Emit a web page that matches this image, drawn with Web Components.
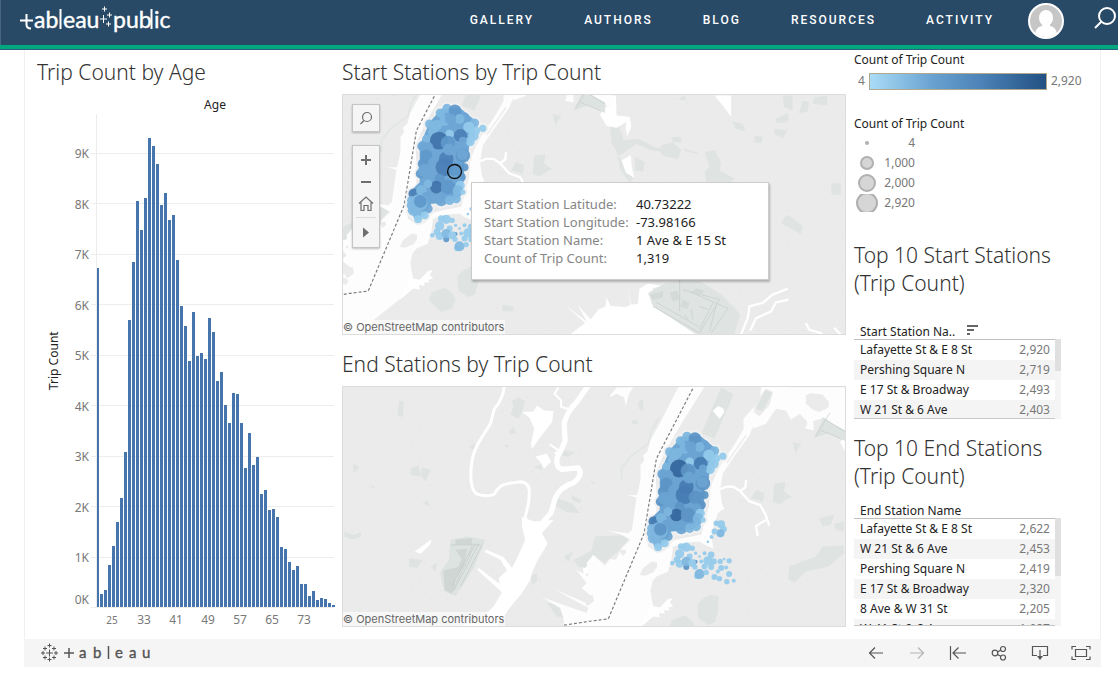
<!DOCTYPE html>
<html lang="en">
<head>
<meta charset="utf-8">
<title>Trip dashboard</title>
<style>
body { margin: 0; background: #fff; color: #333; font: 12px/20px "Noto Sans", "Open Sans", sans-serif; }
</style>
</head>
<body>
<site-header></site-header>
<dash-board></dash-board>
<script>
const define = (name, html, setup) => customElements.define(name, class extends HTMLElement {
  constructor() {
    super();
    this.attachShadow({ mode: 'open' }).innerHTML = html;
  }
  connectedCallback() { if (setup) setup(this, this.shadowRoot); }
});

/* ---------- header ---------- */
define('site-header', `
<style>
:host { display: block; }
header { display: flex; align-items: center; height: 45px; background: #284a67; border-bottom: 4px solid #00a87e; box-shadow: inset 1px 0 #47657e, 0 1px #2f5f80; margin-bottom: 1px; padding-left: 20px; overflow: hidden; }
.logo { display: block; width: 152px; height: 36px; margin-bottom: 4px; }
.logo svg { display: block; }
nav { display: flex; gap: 52px; margin-left: auto; padding-bottom: 6px; }
nav a { color: #fff; text-decoration: none; font: 500 12px/20px Roboto, "Noto Sans", sans-serif; letter-spacing: 2px; white-space: nowrap; margin-right: -2px; }
.me { margin: 0 0 3px 36px; height: 36px; }
button { background: none; border: 0; padding: 0; margin: 0 0 8px 28px; width: 26px; height: 24px; }
</style>
<header>
  <a class="logo" href="#" aria-label="tableau public"><svg width="152" height="36" fill="#fff" font-family="Lato, sans-serif" font-size="23">
    <path d="M0 17.5h13M6.500 11v10.500q0 4 4.500 4M40.500 6v20M131.500 6v20" fill="none" stroke="#fff" stroke-width="2"/>
    <g stroke="#fff" stroke-width=".4"><text x="14" y="25">ab</text><text x="43" y="25">eau</text><text x="93" y="25">pub</text><text x="134" y="25">ic</text></g>
    <path d="M80 16h7M83.500 12v8M82 6h5M84.500 3.500v5M87 12h5M89.500 9.500v5M86 21h5M88.500 18.500v5" stroke="#fff" stroke-width="1"/>
  </svg></a>
  <nav><a href="#">GALLERY</a><a href="#">AUTHORS</a><a href="#">BLOG</a><a href="#">RESOURCES</a><a href="#">ACTIVITY</a></nav>
  <a class="me" href="#" aria-label="Profile"><svg width="36" height="36"><defs><clipPath id="c"><circle cx="18" cy="18" r="16"/></clipPath></defs><circle cx="18" cy="18" r="17" fill="#c6c6c6" stroke="#fff" stroke-width="2"/><g clip-path="url(#c)" fill="#fff"><ellipse cx="18" cy="15" rx="7" ry="8"/><path d="M14 19h8v4c5 1 7 4 7 12H7c0-8 2-11 7-12z"/></g></svg></a>
  <button aria-label="Search"><svg width="26" height="24" fill="none" stroke="#fff" stroke-width="2"><circle cx="15" cy="9" r="8"/><path d="M9 15l-6 6"/></svg></button>
</header>`);

/* ---------- histogram ---------- */
const bars = [339,13,17,42,61,85,109,155,287,345,406,377,409,469,461,443,402,414,387,392,347,301,281,246,295,251,254,248,289,275,226,235,202,184,214,213,184,139,174,142,150,113,117,97,98,90,60,58,45,37,41,23,23,11,16,7,9,8,4,2];
define('age-chart', `
<style>
:host { display: grid; grid-template-columns: 54px minmax(0, 1fr); grid-template-rows: 44px 20px 493px 24px; }
h2 { grid-column: 1 / 3; margin: 8px 0 0; font-size: 21px; line-height: 28px; font-weight: 300; white-space: nowrap; }
.age { grid-column: 2 / 3; text-align: center; color: #222; line-height: 22px; padding-left: 5px; }
.y { display: flex; margin-right: 2px; color: #787878; }
.name { writing-mode: vertical-rl; transform: rotate(180deg); text-align: center; color: #222; line-height: 20px; margin-left: 7px; }
.ticks { flex: 1; text-align: right; }
.list { display: flex; flex-direction: column; justify-content: space-between; height: 424px; padding: 30px 0 22px; }
.plot { height: 493px; overflow: visible; width: 100%; display: block; }
.x { grid-column: 2; display: flex; color: #787878; padding-left: 5px; line-height: 26px; }
.x span { flex: 0 0 32px; text-align: center; white-space: nowrap; }
.x .s { font-size: 10px; }
.plotbox { padding-left: 5px; height: 493px; }
</style>
<h2>Trip Count by Age</h2>
<div class="age">Age</div>
<div class="y"><div class="name">Trip Count</div><div class="ticks"><div class="list"><span>9K</span><span>8K</span><span>7K</span><span>6K</span><span>5K</span><span>4K</span><span>3K</span><span>2K</span><span>1K</span></div>0K</div></div>
<div class="plotbox"><svg class="plot" viewBox="0 0 238 493" preserveAspectRatio="none" shape-rendering="crispEdges" role="img" aria-label="Trip count by age"></svg></div>
<div class="x"><span class="s">25</span><span>33</span><span>41</span><span>49</span><span>57</span><span>65</span><span>73</span></div>`,
(el, root) => {
  let s = '<path d="M0.5 0V493" stroke="#ececec"/>';
  for (let k = 0; k < 10; k++) s += `<rect x="-5" y="${Math.round(493 - k * 50.5)}" width="243" height="1" fill="#ededed"/>`;
  bars.forEach((h, i) => { s += `<rect x="${i ? i * 4 : 1}" y="${493 - h}" width="${i ? 3 : 2}" height="${h}" fill="#4575ac"/>`; });
  root.querySelector('.plot').innerHTML = s;
});

/* ---------- maps: one coastline, two views of it ---------- */
const stations = [[292,168,14,1],[272,182,14,1],[316,175,19,3],[345,195,15,2],[375,212,14,1],[400,228,11,0],[330,200,15,1],[285,205,16,1],[303,200,17,2],[240,215,14,1],[262,218,16,1],[358,225,17,0],[372,250,16,0],[380,235,12,0],[333,250,20,4],[300,245,13,0],[250,240,16,1],[230,260,13,1],[268,265,27,5],[362,268,14,0],[340,265,12,2],[325,285,18,2],[345,290,14,2],[218,282,15,2],[235,285,16,2],[230,310,18,3],[250,330,15,2],[290,320,22,4],[285,345,27,4],[295,272,22,3],[298,292,18,2],[340,310,22,3],[338,306,17,2],[220,335,16,3],[212,365,14,3],[225,355,20,2],[240,375,18,2],[345,345,12,3],[318,352,21,3],[270,380,15,3],[335,375,14,3],[260,405,19,5],[320,385,16,2],[295,405,22,3],[332,400,14,0],[325,415,16,1],[340,420,8,0],[320,440,14,1],[235,395,13,1],[192,425,16,4],[215,415,16,1],[185,445,13,1],[230,435,16,2],[252,440,14,2],[275,445,18,2],[300,445,14,1],[235,470,14,2],[190,475,16,1],[182,460,11,1],[205,490,15,1],[225,490,12,0],[205,502,12,0],[208,452,26,1],[212,448,19,3],
[290,502,14,0],[275,500,10,0],[308,505,8,0],[270,522,14,0],[300,530,9,0],[262,540,10,0],[248,550,7,0],[270,552,12,0],[290,562,9,3],[290,545,14,1],[318,546,6,3],[308,550,12,0],[316,562,8,0],[330,530,4,0],[345,520,6,0],[365,525,10,0],[372,545,10,0],[355,543,14,0],[345,560,9,0],[322,590,8,0],[330,583,15,1],[350,578,8,0],[365,562,9,0],[375,592,9,0],[392,545,8,0],[404,538,4,0],[419,543,8,0],[395,565,9,0],[410,563,6,0],[419,583,9,0],[390,597,8,0],[412,606,8,0],[433,603,6,0],[385,575,6,0],[335,545,6,0],[318,520,5,0],[380,430,8,0],[395,433,12,0],[402,448,10,0],[393,460,12,1],[375,455,9,0],[366,471,6,0],[355,486,4,0]];
const geo = `
<rect x="-740" y="-120" width="2270" height="860" fill="#ebebeb"/>
<rect x="-740" y="-120" width="2270" height="860" fill="url(#grain)"/>
<g transform="translate(744 -12)">
  <path fill="#dfe4e2" d="M345 185l30-5 20 35-5 25 45 25-15 20-70-5-5-35 15-15zM727 280h28v35l-28-3zM590 375l15 5 37 30-7 22-60-32zM580 15h30v45l-25-10zM640 30l20 5-5 30-25 3zM675 20l40-5v30l-45-5zM560 85l35-17 5 20-15 10-25-3zM555 115l40 5-15 25-25-15zM495 135l25 5-5 20-20-5zM425 92l35 8 8 25-28-10zM215 165l35-10 25 25-10 27-45-10-12-15zM245 140h30v15h-25zM60 110l25-5 15 35-15 55 45 70-10 15-30-45-10-55-15-20zM95 150l50-5 50 25 20 5v8l-30-2-45-20-50 35-15-20zM135 200l30 15-5 30-25-5zM0 20l45 30-5 18L0 40zM265 25l22-10v15zM280 175l45 12-3 5-40-12z"/>
  <path fill="#fff" d="M35 15h43l2 60 40 5 4 30-12 28-5-28 3-15-30 17-30-5-20-35 22-25zM375 15h50v65l-22-30zM95 210l28-15 2 30 8 38-25-15zM0 735v-43l45-28 5-40 12 25 45 3 15-5-10-60 12 58 20-3 5-45 25-15 45 6-30 8-4 45 145 95z"/>
  <path fill="#dfe4e2" d="M175 610l55-32 100-4 65 40 57 60-17 61H320L190 650z"/>
  <path fill="#d3dad8" d="M180 615l40-12v20l-30 7zM240 610l22-8 10 25-22 10zM280 630l20 10-8 18-20-8zM320 595l25 8-12 10-25-8z"/>
  <path fill="none" stroke="#ccd3d1" stroke-width="3" d="M190 650l140 80 60-100-110-30M270 560v105M200 638l128 74M300 606l115 50-50 75M370 640l-40 80M380 645l-20 80M285 675l10 15M305 660l5 30M330 650l25 10"/>
  <path fill="none" stroke="#fff" stroke-width="7" stroke-linejoin="round" d="M455 735l20-50 5-35 40-10 30-25 45-18M598 630l-38 8-15 28-45 20-18 38M650 700l10 20 40 12M735 715l20 20"/>
</g>
<g transform="translate(-6 -12)">
  <path fill="#dfe4e2" d="M270 610l50-13 25 30-10 30-35 10-30-30zM350 560l22-22 18 20 20 15-5 40-20 10-32-20zM485 645l35 5v15h-35zM430 705l25 5-15 15-15-5z"/>
  <path fill="#fff" d="M690 735L735 700 674 645 742 698 712 645 752 690 775 660 800 650V735zM5 440L30 430 45 445 8 475z"/>
</g>
<g transform="translate(-729 -246)">
  <path fill="#dfe4e2" d="M515 180l20-8 20 10-5 20-15 35-25-15 10-25zM175 180l15 5-3 45-17-5zM510 270l10-12 8 20-20 5zM385 320l20-12-5 20zM490 312l15 3-5 8zM210 385l25-10 5 35-30-5zM245 380l25 10-15 35-15-20zM245 490l15-10 10 20zM35 370l20 10-15 20zM10 575l30 10 20-10v15l-25 10-25-10zM205 655l40 5-15 25-25-5zM270 680l20-12-5 30zM650 475l45 15 25 30-40-3-35-20zM665 330l40 5-20 15-20-3zM580 380l25-8v18zM695 465l30 15-5 12-28-15zM620 790l40 5 10 40-20-5zM570 710l20-10v25l-15 10zM670 650l30-15-15 30zM700 660l60-30 25 10-50 45-20-5zM750 420l15 8-5 5zM90 435l12 5-8 5z"/>
  <path fill="#dde3e1" d="M330 600l50-10 55 10-35 85-55 85-35-15-12-55 27-40z"/>
  <path fill="#cfd6d4" d="M345 630l35-3-10 50-25 40-10 45-22-10-5-60 45-10 10-25zM345 600l50-5v18h-50z"/>
  <path fill="none" stroke="#c0c9c6" stroke-width="2" d="M330 615h90M405 610l-70 145M415 612l-75 140M425 615l-65 125M395 620l-60 120"/>
  <path fill="none" stroke="#fff" stroke-width="9" stroke-linejoin="round" d="M492 130Q490 175 462 205L450 250C425 290 400 325 395 360C385 420 395 455 410 462Q440 472 462 462C478 430 500 430 540 425Q570 428 567 460L565 490 555 530 562 560"/>
  <path fill="none" stroke="#fff" stroke-width="16" stroke-linejoin="round" d="M745 135L710 185Q680 215 672 250L675 300Q665 330 652 350Q645 380 665 388L715 383Q730 405 700 428Q660 440 645 475L632 520 600 555"/>
  <path fill="none" stroke="#fff" stroke-width="6" d="M655 140L643 160 663 180V200L693 208M628 312L658 332 643 340"/>
  <path fill="#fff" d="M545 215L580 213 590 195 612 210 640 212 636 245 600 290 575 327 572 310 582 265 568 232zM585 350L620 340 633 365 612 385 600 365zM222 635L250 615 273 598 268 615 240 642zM545 530L580 545 640 540 605 580 622 612 605 640 590 665 575 700 570 720 545 760 520 790 490 830 470 860H360L430 830 460 800 485 758 410 690 415 685 478 733 475 715 500 692 480 660 432 636 438 630 490 652 515 685 535 645 555 600 545 560z"/>
</g>
<g transform="translate(21 -126)">
  <path fill="#dfe4e2" d="M395 20L433 42 375 175 335 160zM555 310L590 305 585 335 608 350 570 372 550 365zM500 330L525 340 520 365 485 355zM610 185L635 190 620 220zM690 415L735 405 725 435 700 440zM735 432L765 425V455L740 450zM600 560L680 530 700 500 765 497V520L720 560 650 575 615 610 597 598zM335 665L360 645 388 650 385 705 365 733 328 715zM250 720L285 708 310 725 305 745H235zM15 470L125 465 90 510 45 548 0 528zM145 65L160 57V92L148 85zM125 120H143V130H128z"/>
  <path fill="none" stroke="#e1e5e4" stroke-width="5" d="M210 110L185 150 175 190 120 230 95 265V300"/>
  <path fill="#fdfdfd" d="M270 12L215 120 182 180 172 215 160 225 163 240 152 255V300L142 345 112 346 140 352 126 450 115 460 50 452 90 462 122 480 95 505 78 540 60 538 45 558 10 525 -10 550 -5 590 -42 570 -10 610 -25 625 10 655 0 675 -105 630 -5 685 -10 700 -145 653 -90 685 -80 715 -70 860H33L73 804 123 764 173 724 205 700 185 680 183 630 188 605 200 590 235 575 245 540 250 500 300 487 330 485 350 498 372 505 365 470 372 440 385 400 400 388 392 330 400 280 430 235 480 165 490 140 530 118 560 85 600 40V12H515L512 60 485 90 462 115 463 145 437 190 390 260 362 320 358 380 346 420 335 464 280 475 250 482 225 512 205 520 175 500 166 440 200 395 198 280 225 215 275 130 349 12z"/>
  <path fill="#fdfdfd" d="M590 20H790V170L705 112 672 122 674 150 648 145 655 125 632 100 605 118 590 90 560 85 530 130 490 145 510 110zM60 45L80 22 130 20 118 40 108 75 102 50 80 40 62 50z"/>
  <path fill="#ebebeb" d="M650 45L665 38 700 42 720 65 718 82 690 95 672 88 650 70zM150 585L160 565 185 545 202 548 202 562 190 578 165 588zM88 512L105 508 110 518 98 528zM493 95L500 62 530 25 552 35 540 75 510 108zM-20 655L8 645 12 665 -10 680z"/>
  <path fill="#dde3e1" d="M500 85L528 28 548 38 520 92zM672 175L702 115 768 150V182L718 158z"/>
  <path fill="none" stroke="#ebebeb" stroke-width="4" d="M412 248L470 165"/>
  <path fill="none" stroke="#c2cbc8" stroke-width="2" d="M680 168L722 98M700 112L768 154M695 150L755 175"/>
  <path fill="#fff" d="M370 92L385 77 402 84 404 96 390 115z"/>
  <path fill="none" stroke="#fff" stroke-width="7" stroke-linejoin="round" d="M390 328L410 320 432 320 452 333 468 322 470 300M452 333L480 364 512 375 528 402 540 437M530 420L500 438 505 468M395 375L402 388"/>
  <path fill="#fff" d="M183 645L190 680 210 684 235 658 250 655 240 668 250 680 235 684 240 692 222 692 225 702 208 700 210 714 190 710 150 745 180 680z"/>
  <path fill="#ebebeb" d="M186 655L200 645 215 660 208 676 194 676z"/>
  <path fill="none" stroke="#7a7a7a" stroke-width="3.500" stroke-dasharray="9 6" d="M-78 737L0 725 55 718 163 460 200 235 316 12"/>
</g>`;
define('trip-map', `
<style>
:host { display: block; position: relative; border: 1px solid #dcdcdc; box-sizing: border-box; height: 241px; }
.map { display: block; width: 100%; height: 100%; }
small { position: absolute; left: 0; bottom: 0; background: rgba(255,255,255,.6); color: #666; font: 11px/14px Inter, sans-serif; padding-right: 1px; white-space: nowrap; }
</style>
<svg class="map" preserveAspectRatio="xMidYMid slice" role="img"></svg>
<small>© OpenStreetMap contributors</small>
<slot></slot>`,
(el, root) => {
  const end = el.getAttribute('view') === 'end';
  const svg = root.querySelector('.map');
  svg.setAttribute('viewBox', end ? '-723 -108 1512 723' : '0 0 1512 723');
  svg.setAttribute('aria-label', end ? 'End stations' : 'Start stations');
  const tone = end ? ['#92caeb','#7db6df','#6ba4d2','#5b93c5','#457bb2','#35669d'] : ['#94cbec','#7fb8e1','#6ea7d5','#5f98ca','#4a80b7','#3f73aa'];
  svg.innerHTML = `<defs><pattern id="grain" width="90" height="90" patternUnits="userSpaceOnUse"><path fill="#e6e7e7" d="M10 10h6v4h-6zM45 22h4v7h-4zM75 8h5v4h-5zM22 55h7v4h-7zM60 60h4v5h-4zM80 78h6v4h-6zM38 80h5v4h-5z"/></pattern></defs>` + geo +
    '<g transform="translate(21 -126)"><g fill="#f1f1f1">' + stations.slice(0, 64).map(([x, y, r]) => `<circle cx="${x}" cy="${y}" r="${r + 6}"/>`).join('') + '</g>' +
    `<path fill="${tone[2]}" d="M275 170L330 165 378 205 376 255 346 305 343 380 335 430 305 450 245 455 225 490 200 500 180 475 185 415 210 390V280L240 210z"/>` +
    stations.map(([x, y, r, t]) => `<circle cx="${x}" cy="${y}" r="${r}" fill="${tone[t]}" fill-opacity=".93"/>`).join('') + '</g>' +
    (end ? '' : '<circle cx="336" cy="232" r="21" fill="none" stroke="#111" stroke-width="4"/>');
});

define('map-tools', `
<style>
:host { position: absolute; left: 9px; top: 9px; width: 28px; display: flex; flex-direction: column; gap: 13px; }
div { background: #f5f5f5; border: 1px solid #c4c4c4; box-shadow: 0 1px 2px rgba(0,0,0,.25); }
button { display: block; width: 26px; height: 22px; padding: 0; border: 0; background: none; }
.one button { height: 26px; }
.many { padding: 3px 0 4px; }
.many button:last-child { height: 28px; }
svg { display: block; margin: auto; fill: none; stroke: #6e6e6e; }
</style>
<div class="one"><button aria-label="Search map"><svg width="14" height="14" stroke-width="1.200"><circle cx="8" cy="6" r="4.500"/><path d="M5 9.500L1.500 13"/></svg></button></div>
<div class="many">
<button aria-label="Zoom in"><svg width="12" height="12" stroke-width="2"><path d="M1 6h10M6 1v10"/></svg></button>
<button aria-label="Zoom out"><svg width="12" height="12" stroke-width="2"><path d="M1 6h10"/></svg></button>
<button aria-label="Home"><svg width="16" height="16" stroke-width="1.200"><path d="M1 7.500L8 1l7 6.500M3 6.500v8h3v-5h4v5h3v-8"/></svg></button>
<button aria-label="More tools"><svg width="22" height="26"><path d="M1 1.500h20" stroke="#ddd"/><path d="M8 11.500v10l6-5z" fill="#6e6e6e" stroke="none"/></svg></button>
</div>`);

define('map-tip', `
<style>
:host { position: absolute; left: 128px; top: 87px; width: 298px; height: 98px; box-sizing: border-box; background: #fff; border: 1px solid #ccc; box-shadow: 1px 2px 2px rgba(0,0,0,.25); padding: 12px; }
dl { margin: 0; display: grid; grid-template-columns: 152px 1fr; font-size: 13px; line-height: 18px; white-space: nowrap; }
dt { color: #858585; } dd { margin: 0; color: #222; }
</style>
<dl><dt>Start Station Latitude:</dt><dd>40.73222</dd><dt>Start Station Longitude:</dt><dd>-73.98166</dd><dt>Start Station Name:</dt><dd>1 Ave &amp; E 15 St</dd><dt>Count of Trip Count:</dt><dd>1,319</dd></dl>`);

/* ---------- legends and tables ---------- */
define('color-legend', `
<style>
:host { display: block; height: 65px; color: #222; }
.row { display: flex; align-items: center; gap: 4px; padding-left: 4px; line-height: 20px; margin-top: 1px; color: #787878; }
i { width: 176px; height: 15px; border: 1px solid #b0a98c; background: linear-gradient(90deg, #aadcf6, #6aa3d2 35%, #4a80b5 65%, #225083); }
</style>
Count of Trip Count
<div class="row"><span>4</span><i></i><span>2,920</span></div>`);

define('size-legend', `
<style>
:host { display: block; color: #222; line-height: 18px; }
.row { display: grid; grid-template-columns: 26px 35px; height: 20px; line-height: 20px; color: #787878; text-align: right; align-items: center; }
svg { display: block; width: 26px; height: 18px; fill: #d6d6d6; stroke: #b0b0b0; stroke-width: 2; }
</style>
Count of Trip Count
<div class="row"><svg><circle cx="13" cy="9" r="1"/></svg>4</div>
<div class="row"><svg><circle cx="13" cy="9" r="6"/></svg>1,000</div>
<div class="row"><svg><circle cx="13" cy="9" r="8"/></svg>2,000</div>
<div class="row"><svg><circle cx="13" cy="9" r="10"/></svg>2,920</div>`);

define('top-table', `
<style>
:host { display: block; width: 207px; }
h2 { margin: 0 0 var(--gap); font-size: 21px; line-height: 28px; font-weight: 300; white-space: nowrap; }
.frame { display: flex; align-items: flex-end; }
.clip { width: 201px; height: var(--h); overflow: hidden; border-bottom: 1px solid #c8c8c8; box-sizing: border-box; }
table { width: 201px; border-collapse: collapse; color: #222; }
th { font-weight: 400; text-align: left; height: 15px; line-height: 15px; padding: 3px 6px 0; border-bottom: 1px solid #c0c0c0; white-space: nowrap; }
th svg { margin-left: 12px; }
td { height: 20px; line-height: 20px; padding: 0 5px 0 6px; white-space: nowrap; }
td + td { text-align: right; color: #787878; }
tr:nth-child(even) td { background: #f4f4f4; }
.bar { width: 6px; margin-left: auto; height: var(--track); background: #f5f5f5; }
.bar i { display: block; height: var(--thumb); background: #e0e0e0; }
</style>
<h2><slot></slot></h2>
<div class="frame"><div class="clip"><table><thead></thead><tbody></tbody></table></div><div class="bar"><i></i></div></div>`,
(el, root) => {
  const sort = el.hasAttribute('sorted') ? '<svg width="11" height="11" fill="#666"><path d="M0 0h11v2H0zM0 4h7v2H0zM0 8h3v2H0z"/></svg>' : '';
  root.querySelector('thead').innerHTML = `<tr><th colspan="2" scope="col">${el.getAttribute('head')}${sort}</th></tr>`;
  root.querySelector('tbody').innerHTML = el.getAttribute('rows').split(';').map(r => {
    const [a, b] = r.split('|');
    return `<tr><td>${a.replace('&', '&amp;')}</td><td>${b}</td></tr>`;
  }).join('');
});

/* ---------- footer toolbar ---------- */
define('viz-toolbar', `
<style>
:host { display: flex; align-items: center; height: 28px; background: #f5f5f5; }
.logo { display: block; margin: 0 auto 0 17px; }
.logo svg { display: block; }
button { width: 41px; height: 28px; padding: 0; border: 0; background: none; }
button svg { display: block; margin: auto; fill: none; stroke: #555; stroke-width: 1.200; }
button:disabled svg { stroke: #b5b5b5; }
</style>
<a class="logo" href="#" aria-label="tableau"><svg width="112" height="20" fill="#555" font-family="Lato, sans-serif" font-size="15">
<path stroke="#555" fill="none" d="M5 10h7M8.500 6.500v7M6.500 2.500h4M8.500 .5v4M6.500 16.500h4M8.500 14.500v4M0 10h4M2 8v4M13 10h4M15 8v4M2 5.500h4M4 3.500v4M11 5.500h4M13 3.500v4M2 14.500h4M4 12.500v4M11 14.500h4M13 12.500v4"/>
<path stroke="#555" stroke-width="1.500" fill="none" d="M23 10h10M28 5v10M67.500 3v13"/>
<g stroke="#555" stroke-width=".4"><text x="38" y="15">a</text><text x="52" y="15">b</text><text x="74" y="15">e</text><text x="88" y="15">a</text><text x="101" y="15">u</text></g></svg></a>
<button aria-label="Undo"><svg width="16" height="14"><path d="M15 7H1.500M7 1.500L1.500 7 7 12.500"/></svg></button>
<button aria-label="Redo" disabled><svg width="16" height="14"><path d="M1 7h13.500M9 1.500L14.500 7 9 12.500"/></svg></button>
<button aria-label="Revert"><svg width="18" height="16"><path d="M1.500 1v14M17 8H4M9.500 2.500L4 8l5.500 5.500"/></svg></button>
<button aria-label="Share"><svg width="16" height="16"><circle cx="4" cy="8" r="2.800"/><circle cx="12" cy="4" r="2.500"/><circle cx="12" cy="12.500" r="2.500"/><path d="M6.500 7l3.300-2M6.500 9.500l3.300 1.800"/></svg></button>
<button aria-label="Download"><svg width="18" height="16"><path d="M6 10.500H1.500V1.500h15v9H12M9 5v9"/><path d="M6 11l3 4 3-4z" fill="#555" stroke="none"/></svg></button>
<button aria-label="Full screen"><svg width="20" height="16"><path d="M4.500 4.500h11v7h-11zM1 4.500V1.500h4M15 1.500h4v3M1 11.500v3h4M15 14.500h4v-3"/></svg></button>`);

/* ---------- page ---------- */
define('dash-board', `
<style>
:host { display: block; margin: 0 17px 0 24px; border: solid #f0f0f0; border-width: 0 1px; }
main { display: grid; grid-template-columns: minmax(0, 297fr) minmax(0, 504fr) 246px; column-gap: 8px; padding: 0 0 8px 12px; }
h2 { margin: 0; padding: 8px 0; font-size: 21px; line-height: 28px; font-weight: 300; white-space: nowrap; }
trip-map + h2 { padding-top: 15px; }
top-table.a { margin-top: 28px; --gap: 24px; --h: 98px; --track: 80px; --thumb: 32px; }
top-table.b { margin-top: 15px; --gap: 10px; --h: 126px; --track: 108px; --thumb: 58px; }
viz-toolbar { margin: 0 -1px; }
</style>
<main>
  <age-chart></age-chart>
  <section>
    <h2>Start Stations by Trip Count</h2>
    <trip-map view="start"><map-tools></map-tools><map-tip></map-tip></trip-map>
    <h2>End Stations by Trip Count</h2>
    <trip-map view="end"></trip-map>
  </section>
  <aside>
    <color-legend></color-legend>
    <size-legend></size-legend>
    <top-table class="a" sorted head="Start Station Na.." rows="Lafayette St & E 8 St|2,920;Pershing Square N|2,719;E 17 St & Broadway|2,493;W 21 St & 6 Ave|2,403">Top 10 Start Stations<br>(Trip Count)</top-table>
    <top-table class="b" head="End Station Name" rows="Lafayette St & E 8 St|2,622;W 21 St & 6 Ave|2,453;Pershing Square N|2,419;E 17 St & Broadway|2,320;8 Ave & W 31 St|2,205;W 41 St & 8 Ave|1,987">Top 10 End Stations<br>(Trip Count)</top-table>
  </aside>
</main>
<viz-toolbar></viz-toolbar>`);
</script>
</body>
</html>
